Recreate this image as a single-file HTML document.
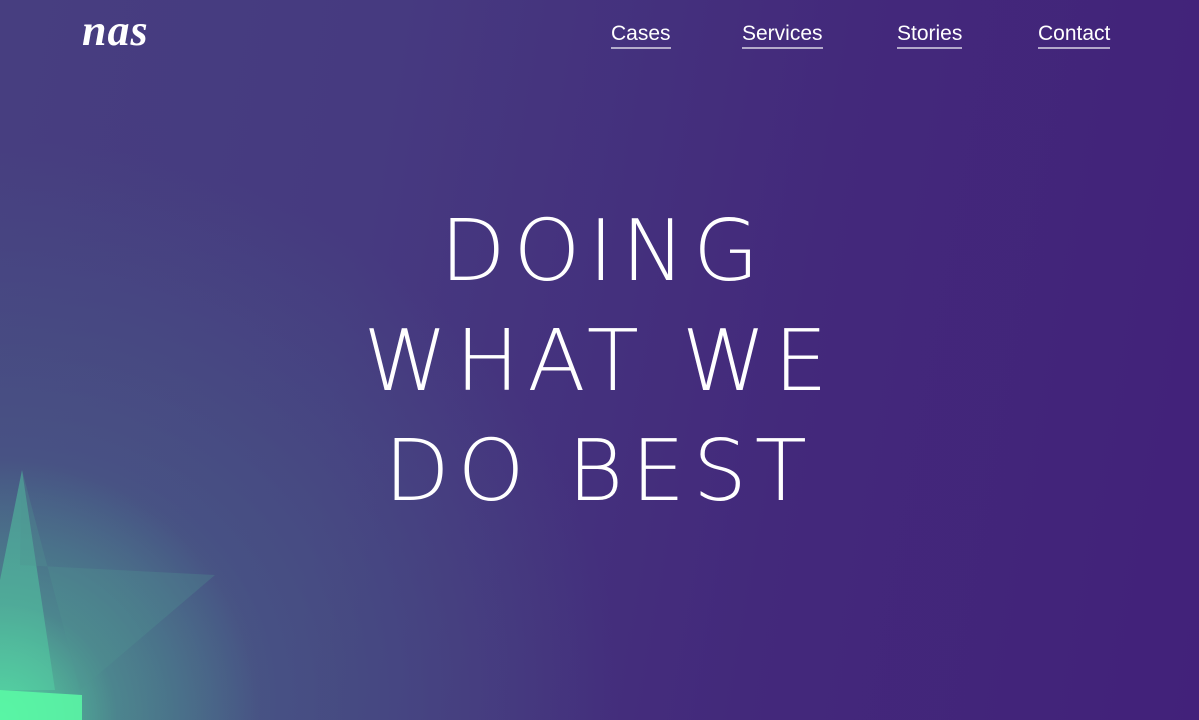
<!DOCTYPE html>
<html><head><meta charset="utf-8"><style>
html,body{margin:0;padding:0;width:1199px;height:720px;overflow:hidden}
body{position:relative;font-family:"Liberation Sans",sans-serif;
background:
radial-gradient(ellipse 260px 260px at 0px 720px, rgba(88,250,168,.75) 0%, rgba(80,170,150,.45) 45%, rgba(75,120,140,0) 100%),
radial-gradient(ellipse 620px 560px at 0px 700px, rgba(74,120,138,.95) 0%, rgba(72,95,134,.6) 45%, rgba(70,60,125,0) 100%),
linear-gradient(100deg,#473e80 0%,#463a80 30%,#43297b 65%,#42217a 100%);}
svg.bg{position:absolute;left:0;top:0}
.logo{position:absolute;left:82px;top:5px;color:#fff;font-family:"Liberation Serif",serif;font-style:italic;font-weight:bold;font-size:44px;letter-spacing:1px}
nav a{position:absolute;top:22px;color:#fff;font-size:21px;text-decoration:none;border-bottom:2px solid rgba(255,255,255,.6);padding-bottom:1px;line-height:24px}
h1{position:absolute;left:0;width:1199px;top:0;margin:0;text-align:center;color:#fff;font-family:"DejaVu Sans ExtraLight","DejaVu Sans","Liberation Sans",sans-serif;font-weight:200;font-size:85px;line-height:110px;padding-top:197px;letter-spacing:8px;text-indent:8px}
</style></head><body>
<svg class="bg" width="1199" height="720">
<polygon points="0,580 22,470 55,690 0,690" fill="#55d6a6" opacity=".45"/>
<polygon points="0,690 82,695 82,720 0,720" fill="#5afaa6" opacity=".85"/>
<polygon points="22,470 80,690 215,575 20,565" fill="#4f9592" opacity=".3"/>
</svg>
<div class="logo">nas</div>
<nav><a style="left:611px">Cases</a><a style="left:742px">Services</a><a style="left:897px">Stories</a><a style="left:1038px">Contact</a></nav>
<h1>DOING<br>WHAT WE<br>DO BEST</h1>
</body></html>
